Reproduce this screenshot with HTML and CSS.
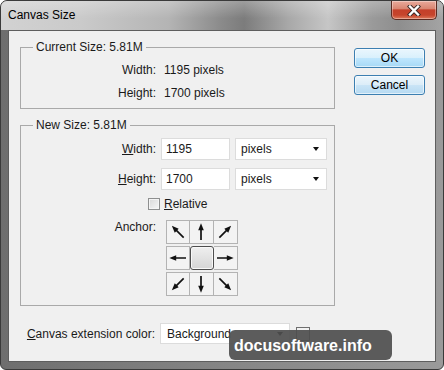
FILE: index.html
```html
<!DOCTYPE html>
<html>
<head>
<meta charset="utf-8">
<link rel="stylesheet" href="styles.css">
</head>
<body>
<div class="window">
  <div class="titlebar">
    <span class="title">Canvas Size</span>
    <div class="close">
      <svg width="14" height="11" viewBox="0 0 14 11">
        <path d="M3 1.5 L11 9.5 M11 1.5 L3 9.5" stroke="#3a2a28" stroke-width="4.2" stroke-linecap="square" fill="none"/>
        <path d="M3 1.5 L11 9.5 M11 1.5 L3 9.5" stroke="#ffffff" stroke-width="2.4" stroke-linecap="square" fill="none"/>
      </svg>
    </div>
  </div>
  <div class="client">
    <div class="main">
      <fieldset class="group g1">
        <legend>Current Size: 5.81M</legend>
        <div class="info-grid">
          <span class="lbl">Width:</span><span>1195 pixels</span>
          <span class="lbl">Height:</span><span>1700 pixels</span>
        </div>
      </fieldset>
      <fieldset class="group g2">
        <legend>New Size: 5.81M</legend>
        <div class="form-grid">
          <span class="lbl"><u>W</u>idth:</span>
          <div class="input">1195</div>
          <div class="select"><span>pixels</span><i class="caret"></i></div>
          <span class="lbl"><u>H</u>eight:</span>
          <div class="input">1700</div>
          <div class="select"><span>pixels</span><i class="caret"></i></div>
        </div>
        <div class="relative-row">
          <span class="checkbox"></span><span><u>R</u>elative</span>
        </div>
        <div class="anchor-row">
          <span class="lbl anchor-lbl">Anchor:</span>
          <div class="anchor-grid">
            <div class="cell"><svg class="arr" viewBox="0 0 22 22"><g transform="rotate(-45 11 11)"><path d="M11 19 L11 7" stroke="#111" stroke-width="1.7"/><path d="M11 2.3 L8.2 9.2 L13.8 9.2 Z" fill="#111"/></g></svg></div>
            <div class="cell"><svg class="arr" viewBox="0 0 22 22"><g transform="rotate(0 11 11)"><path d="M11 19 L11 7" stroke="#111" stroke-width="1.7"/><path d="M11 2.3 L8.2 9.2 L13.8 9.2 Z" fill="#111"/></g></svg></div>
            <div class="cell"><svg class="arr" viewBox="0 0 22 22"><g transform="rotate(45 11 11)"><path d="M11 19 L11 7" stroke="#111" stroke-width="1.7"/><path d="M11 2.3 L8.2 9.2 L13.8 9.2 Z" fill="#111"/></g></svg></div>
            <div class="cell"><svg class="arr" viewBox="0 0 22 22"><g transform="rotate(-90 11 11)"><path d="M11 19 L11 7" stroke="#111" stroke-width="1.7"/><path d="M11 2.3 L8.2 9.2 L13.8 9.2 Z" fill="#111"/></g></svg></div>
            <div class="cell center"></div>
            <div class="cell"><svg class="arr" viewBox="0 0 22 22"><g transform="rotate(90 11 11)"><path d="M11 19 L11 7" stroke="#111" stroke-width="1.7"/><path d="M11 2.3 L8.2 9.2 L13.8 9.2 Z" fill="#111"/></g></svg></div>
            <div class="cell"><svg class="arr" viewBox="0 0 22 22"><g transform="rotate(-135 11 11)"><path d="M11 19 L11 7" stroke="#111" stroke-width="1.7"/><path d="M11 2.3 L8.2 9.2 L13.8 9.2 Z" fill="#111"/></g></svg></div>
            <div class="cell"><svg class="arr" viewBox="0 0 22 22"><g transform="rotate(180 11 11)"><path d="M11 19 L11 7" stroke="#111" stroke-width="1.7"/><path d="M11 2.3 L8.2 9.2 L13.8 9.2 Z" fill="#111"/></g></svg></div>
            <div class="cell"><svg class="arr" viewBox="0 0 22 22"><g transform="rotate(135 11 11)"><path d="M11 19 L11 7" stroke="#111" stroke-width="1.7"/><path d="M11 2.3 L8.2 9.2 L13.8 9.2 Z" fill="#111"/></g></svg></div>
          </div>
        </div>
      </fieldset>
      <div class="ext-row">
        <span class="lbl"><u>C</u>anvas extension color:</span>
        <div class="select ext-select"><span>Background</span><i class="caret"></i></div>
        <span class="swatch"></span>
      </div>
    </div>
    <div class="buttons">
      <div class="btn ok">OK</div>
      <div class="btn cancel">Cancel</div>
    </div>
  </div>
  <div class="watermark">docusoftware.info</div>
</div>
</body>
</html>
```
FILE: styles.css
```css
body {
  margin: 0;
  background: #ffffff;
  font: 12px "Liberation Sans", Arial, sans-serif;
  color: #1a1a1a;
}

.window {
  position: relative;
  width: 444px;
  height: 370px;
  box-sizing: border-box;
  border: 1px solid #3a3a3a;
  border-radius: 7px 7px 6px 6px;
  background: linear-gradient(90deg, #6e6e6e 0%, #858585 50%, #9a9a9a 100%);
  display: flex;
  flex-direction: column;
  overflow: hidden;
}

.titlebar {
  height: 29px;
  flex: none;
  display: flex;
  justify-content: space-between;
  align-items: flex-start;
  background:
    linear-gradient(180deg, rgba(255,255,255,0.25) 0%, rgba(255,255,255,0) 60%),
    linear-gradient(90deg, #d2d2d2 0%, #cacaca 18%, #b4b4b4 38%, #8a8a8a 50%, #7c7c7c 55%, #a8a8a8 65%, #c6c6c6 74%, #9a9a9a 84%, #8e8e8e 90%, #a4a4a4 100%);
}

.title {
  margin: 7px 0 0 7px;
  line-height: 15px;
  color: #000000;
}

.close {
  width: 46px;
  height: 19px;
  box-sizing: border-box;
  margin-right: 6px;
  border: 1px solid #5b2b22;
  border-top: none;
  border-radius: 0 0 5px 5px;
  background: linear-gradient(180deg, #e9aa9c 0%, #d98672 42%, #c4402a 50%, #c6442c 78%, #dc7a5c 100%);
  display: flex;
  align-items: center;
  justify-content: center;
  box-shadow: inset 0 0 0 1px rgba(255,255,255,0.35);
}

.client {
  height: 332px;
  margin: 0 7px;
  box-sizing: border-box;
  border: 1px solid #5e5e5e;
  background: #f0f0f0;
  display: flex;
  padding: 9px 10px 0 11px;
}

.main {
  width: 315px;
  flex: none;
}

.group {
  margin: 0;
  padding: 0;
  box-sizing: border-box;
  border: 1px solid #a9a9a9;
  min-width: 0;
}

.group legend {
  margin-left: 12px;
  padding: 0 3px;
  line-height: 15px;
}

.g1 { height: 69px; }
.g2 { height: 188px; margin-top: 9px; }

.lbl { text-align: right; }

.info-grid {
  display: grid;
  grid-template-columns: 135px auto;
  column-gap: 8px;
  grid-auto-rows: 23px;
  line-height: 23px;
  padding-top: 4px;
}

.form-grid {
  display: grid;
  grid-template-columns: 135px 69px 92px;
  column-gap: 5px;
  row-gap: 8px;
  grid-auto-rows: 22px;
  margin-top: 5px;
  align-items: center;
}

.input {
  height: 22px;
  box-sizing: border-box;
  background: #ffffff;
  border: 1px solid #dcdcdc;
  padding-left: 4px;
  line-height: 20px;
}

.select {
  height: 22px;
  box-sizing: border-box;
  background: #ffffff;
  border: 1px solid #dcdcdc;
  padding: 0 5px 0 5px;
  display: flex;
  align-items: center;
  justify-content: space-between;
}

.caret {
  width: 0;
  height: 0;
  border-top: 4px solid #111111;
  border-left: 3.5px solid transparent;
  border-right: 3.5px solid transparent;
  margin-right: 2px;
}

.relative-row {
  margin-top: 8px;
  padding-left: 127px;
  display: flex;
  align-items: center;
  gap: 4px;
  height: 12px;
  line-height: 12px;
}

.checkbox {
  width: 12px;
  height: 12px;
  box-sizing: border-box;
  border: 1px solid #8e8f8f;
  background: linear-gradient(135deg, #d8d8d8 0%, #f6f6f6 100%);
  box-shadow: inset 0 0 0 1px #f4f4f4;
}

.anchor-row {
  margin-top: 10px;
  display: flex;
  gap: 10px;
}

.anchor-lbl {
  width: 135px;
  line-height: 15px;
}

.anchor-grid {
  display: grid;
  grid-template-columns: repeat(3, 24px);
  grid-auto-rows: 24px;
  row-gap: 2px;
}

.cell {
  box-sizing: border-box;
  border: 1px solid #b3b3b3;
  border-left: none;
  background: #f3f3f3;
}

.cell:nth-child(3n+1) {
  border-left: 1px solid #b3b3b3;
}

.arr {
  display: block;
  width: 22px;
  height: 22px;
}

.cell.center {
  border: 1px solid #4e4e4e;
  border-radius: 3px;
  background: linear-gradient(180deg, #efefef 0%, #e2e2e2 50%, #d6d6d6 100%);
  box-shadow: inset 0 0 0 1px #f8f8f8;
}

.ext-row {
  margin-top: 17px;
  display: flex;
  align-items: center;
}

.ext-row .lbl {
  width: 135px;
  flex: none;
}

.ext-select {
  width: 130px;
  height: 21px;
  margin-left: 5px;
  padding-left: 6px;
  padding-right: 4px;
}

.swatch {
  width: 14px;
  height: 14px;
  box-sizing: border-box;
  margin-left: 6px;
  border: 1px solid #6f6f6f;
  background: #f2f2f2;
}

.buttons {
  margin-left: 19px;
  width: 71px;
  flex: none;
  padding-top: 8px;
  display: flex;
  flex-direction: column;
  gap: 7px;
}

.btn {
  height: 20px;
  box-sizing: border-box;
  border: 1px solid #3c7fb1;
  border-radius: 3px;
  text-align: center;
  line-height: 18px;
  color: #000000;
  box-shadow: inset 0 0 0 1px rgba(255,255,255,0.6);
}

.ok {
  background: linear-gradient(180deg, #eaf6fd 0%, #d9f0fc 48%, #bee6fd 52%, #a7d9f5 100%);
}

.cancel {
  background: linear-gradient(180deg, #edf6fc 0%, #dcedf8 48%, #c9e4f6 52%, #b6daf2 100%);
}

.watermark {
  position: absolute;
  left: 228px;
  top: 329px;
  width: 163px;
  height: 30px;
  box-sizing: border-box;
  padding-left: 5px;
  border-radius: 6px;
  background: rgba(78, 78, 78, 0.92);
  color: #ffffff;
  font: bold 16px "Liberation Sans", Arial, sans-serif;
  line-height: 31px;
}
```
